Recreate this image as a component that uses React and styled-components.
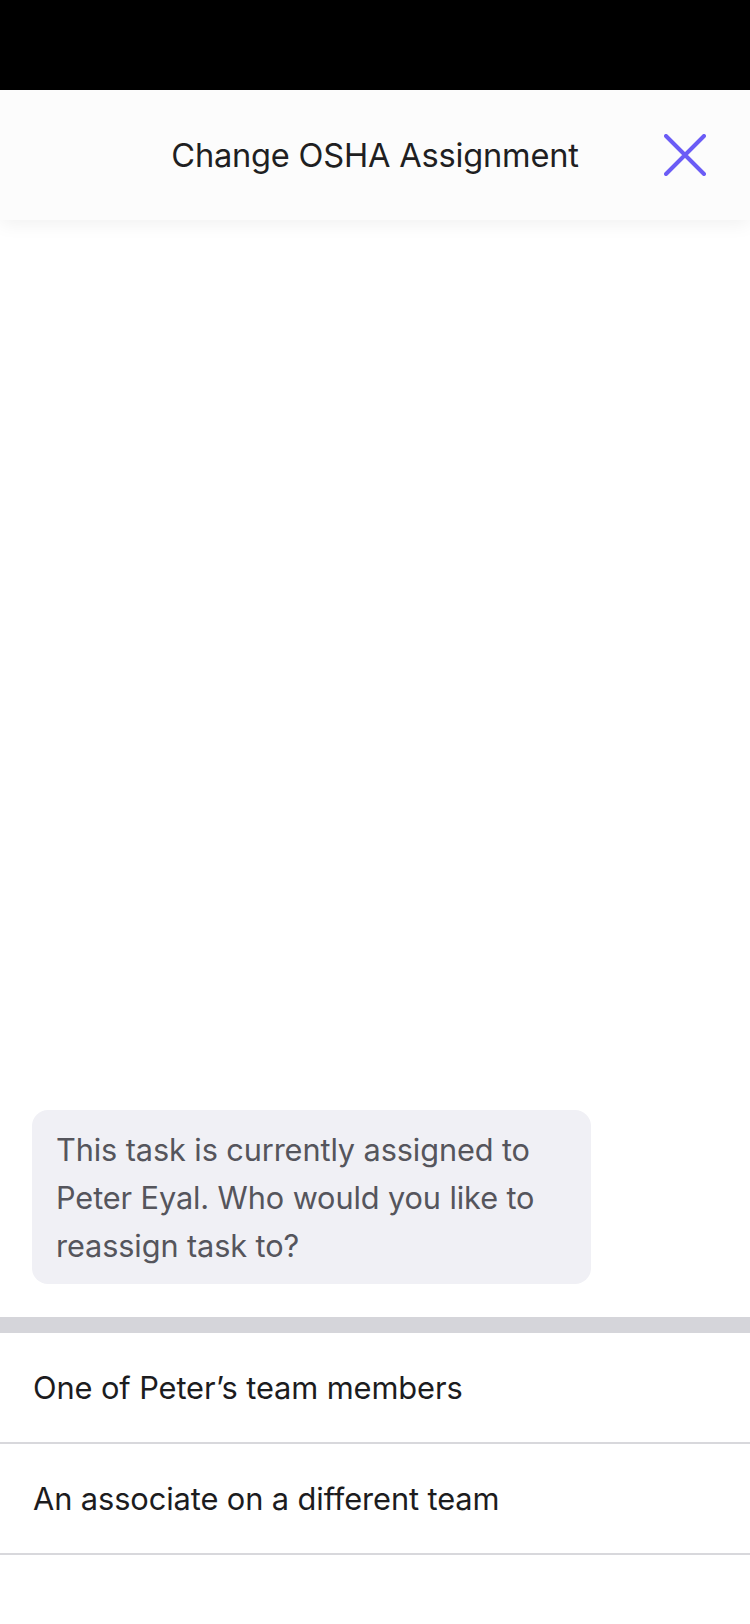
import React from "react";
import styled, { createGlobalStyle } from "styled-components";

const Global = createGlobalStyle`
  html, body { margin: 0; padding: 0; background: #ffffff; }
  body { font-family: Inter, "Noto Sans", sans-serif; -webkit-font-smoothing: antialiased; }
  * { box-sizing: border-box; }
`;

const Screen = styled.div`
  width: 750px;
  height: 1624px;
  display: flex;
  flex-direction: column;
  background: #ffffff;
  overflow: hidden;
`;

const StatusBar = styled.div`
  height: 90px;
  flex: none;
  background: #000000;
`;

const Header = styled.header`
  position: relative;
  z-index: 1;
  height: 130px;
  flex: none;
  display: grid;
  grid-template-columns: 80px 1fr 80px;
  align-items: center;
  background: #fcfcfc;
  box-shadow: 0 4px 18px rgba(0, 0, 0, 0.06);
`;

const Title = styled.h1`
  grid-column: 2;
  margin: 0;
  text-align: center;
  font-size: 32.6px;
  font-weight: 400;
  color: #1f1f22;
  letter-spacing: -0.2px;
`;

const CloseButton = styled.button`
  grid-column: 3;
  justify-self: start;
  width: 44px;
  height: 44px;
  margin-left: -7px;
  padding: 0;
  border: none;
  background: transparent;
  display: flex;
  align-items: center;
  justify-content: center;
`;

const Conversation = styled.main`
  flex: 1;
  display: flex;
  flex-direction: column;
  justify-content: flex-end;
  padding: 0 32px 33px;
`;

const Bubble = styled.div`
  width: 559px;
  padding: 16px 24px 14px;
  background: #f0f0f5;
  border-radius: 16px;
  color: #55555c;
  font-size: 30.7px;
  line-height: 48px;
  letter-spacing: -0.1px;
`;

const Divider = styled.div`
  height: 16px;
  flex: none;
  background: #d5d5da;
`;

const OptionList = styled.ul`
  list-style: none;
  margin: 0 0 69px;
  padding: 0;
`;

const Option = styled.li`
  height: 111px;
  display: flex;
  align-items: center;
  padding: 0 33px 0;
  border-bottom: 2px solid #d8d8dc;
  font-size: 30.8px;
  color: #1c1c1e;
  letter-spacing: -0.1px;
`;

const CloseIcon = () => (
  <svg width="42" height="42" viewBox="0 0 42 42" fill="none">
    <path
      d="M2 2 L40 40 M40 2 L2 40"
      stroke="#6b5cf6"
      strokeWidth="4"
      strokeLinecap="round"
    />
  </svg>
);

export default function App() {
  return (
    <>
      <Global />
      <Screen>
        <StatusBar />
        <Header>
          <Title>Change OSHA Assignment</Title>
          <CloseButton aria-label="Close">
            <CloseIcon />
          </CloseButton>
        </Header>
        <Conversation>
          <Bubble>
            This task is currently assigned to Peter Eyal. Who would you like to
            reassign task to?
          </Bubble>
        </Conversation>
        <Divider />
        <OptionList>
          <Option>One of Peter’s team members</Option>
          <Option>An associate on a different team</Option>
        </OptionList>
      </Screen>
    </>
  );
}
